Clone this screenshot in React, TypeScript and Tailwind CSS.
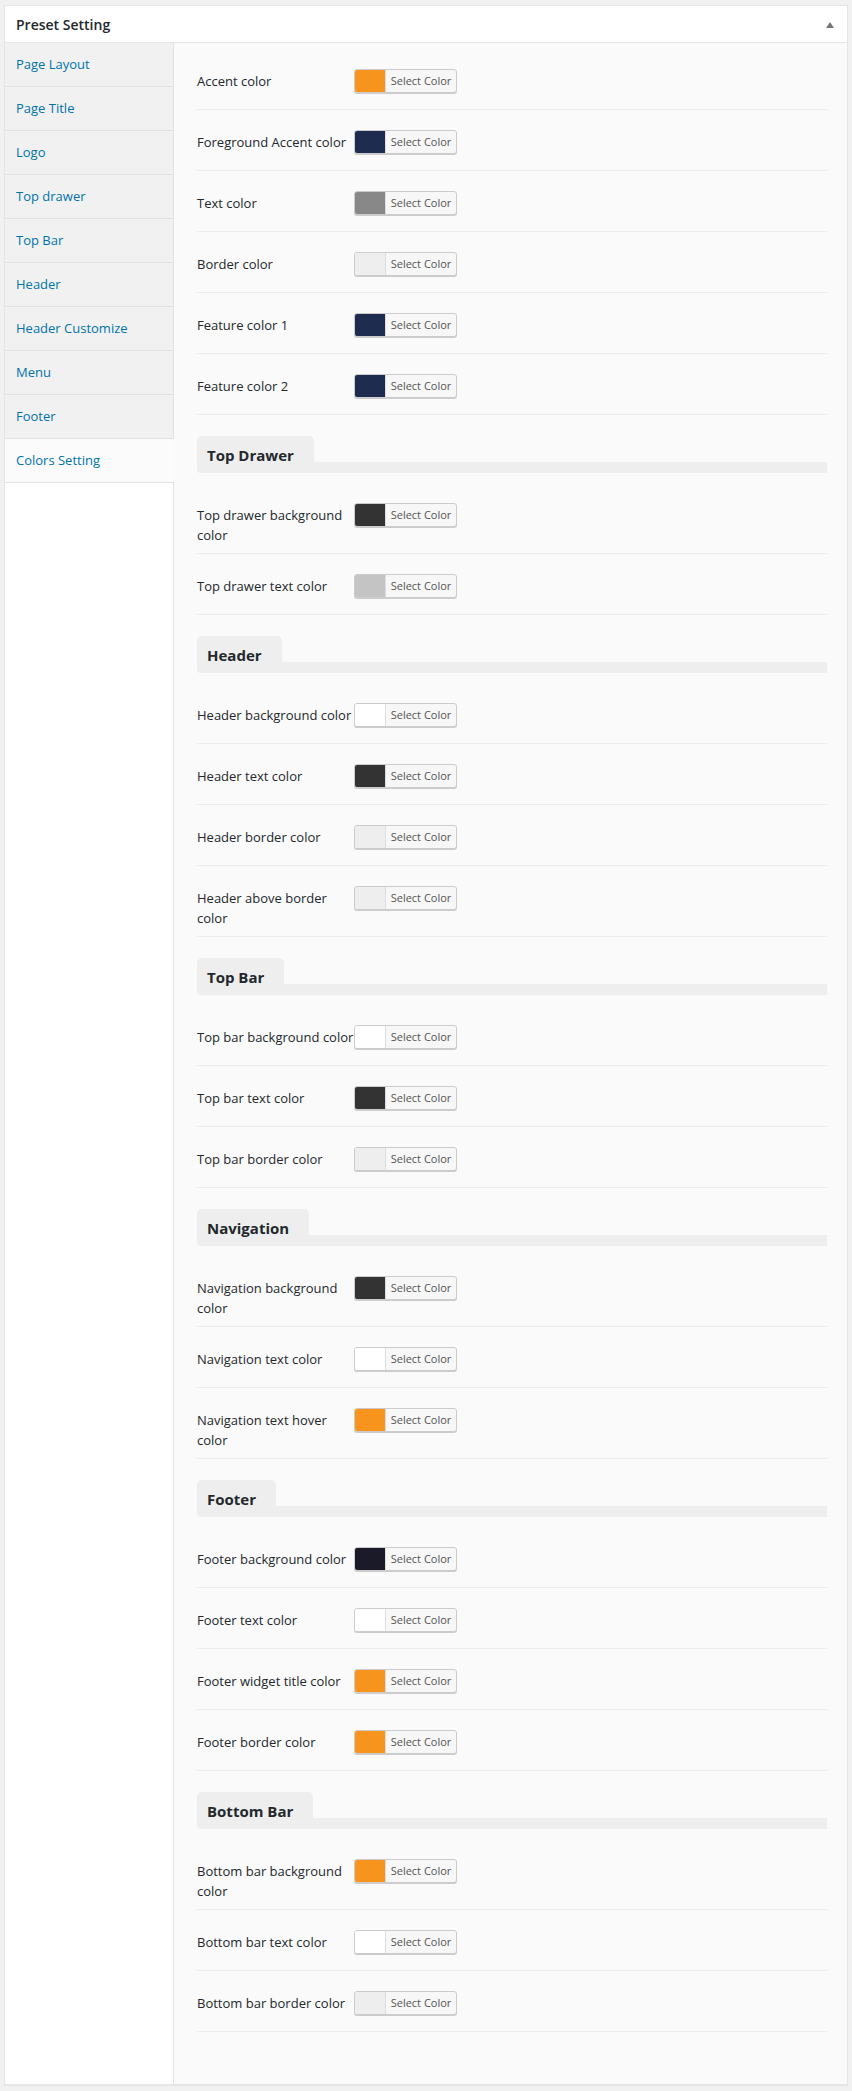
import React from "react";

type ColorRow = {
  label: string;
  swatch: string;
};

type Section = {
  title?: string;
  rows: ColorRow[];
};

const tabs = [
  "Page Layout",
  "Page Title",
  "Logo",
  "Top drawer",
  "Top Bar",
  "Header",
  "Header Customize",
  "Menu",
  "Footer",
  "Colors Setting",
];

const ORANGE = "bg-[#f7941d]";
const NAVY = "bg-[#1d2c4f]";
const DARK = "bg-[#333333]";
const LIGHT = "bg-[#eeeeee]";
const WHITE = "bg-white";

const sections: Section[] = [
  {
    rows: [
      { label: "Accent color", swatch: ORANGE },
      { label: "Foreground Accent color", swatch: NAVY },
      { label: "Text color", swatch: "bg-[#888888]" },
      { label: "Border color", swatch: LIGHT },
      { label: "Feature color 1", swatch: NAVY },
      { label: "Feature color 2", swatch: NAVY },
    ],
  },
  {
    title: "Top Drawer",
    rows: [
      { label: "Top drawer background\ncolor", swatch: DARK },
      { label: "Top drawer text color", swatch: "bg-[#c4c4c4]" },
    ],
  },
  {
    title: "Header",
    rows: [
      { label: "Header background color", swatch: WHITE },
      { label: "Header text color", swatch: DARK },
      { label: "Header border color", swatch: LIGHT },
      { label: "Header above border\ncolor", swatch: LIGHT },
    ],
  },
  {
    title: "Top Bar",
    rows: [
      { label: "Top bar background color", swatch: WHITE },
      { label: "Top bar text color", swatch: DARK },
      { label: "Top bar border color", swatch: LIGHT },
    ],
  },
  {
    title: "Navigation",
    rows: [
      { label: "Navigation background\ncolor", swatch: DARK },
      { label: "Navigation text color", swatch: WHITE },
      { label: "Navigation text hover\ncolor", swatch: ORANGE },
    ],
  },
  {
    title: "Footer",
    rows: [
      { label: "Footer background color", swatch: "bg-[#1a1a28]" },
      { label: "Footer text color", swatch: WHITE },
      { label: "Footer widget title color", swatch: ORANGE },
      { label: "Footer border color", swatch: ORANGE },
    ],
  },
  {
    title: "Bottom Bar",
    rows: [
      { label: "Bottom bar background\ncolor", swatch: ORANGE },
      { label: "Bottom bar text color", swatch: WHITE },
      { label: "Bottom bar border color", swatch: LIGHT },
    ],
  },
];

function ColorButton({ swatch }: { swatch: string }) {
  return (
    <button
      type="button"
      className="flex h-[24px] w-[103px] overflow-hidden rounded-[3px] border border-[#cccccc] bg-[#f7f7f7] shadow-[0_1px_0_#cccccc]">
      <span className={`h-full w-[30px] shrink-0 ${swatch}`} />
      <span className="flex h-full flex-1 items-center justify-center border-l border-[#dddddd] text-[11px] text-[#555555]">
        Select Color
      </span>
    </button>
  );
}

function SectionTitle({ title }: { title: string }) {
  return (
    <div className="mt-[21px] mb-[10px] flex items-end">
      <div className="flex h-[37px] items-center rounded-t-[5px] rounded-bl-[4px] bg-[#eeeeee] pr-[20px] pl-[10px] pt-[1px] text-[15px] font-bold text-[#23282d]">
        {title}
      </div>
      <div className="h-[11px] flex-1 bg-[#eeeeee]" />
    </div>
  );
}

export default function App() {
  return (
    <div className="min-h-screen bg-[#f1f1f1] px-[4px] pt-[5px] pb-[7px] font-['Open_Sans',sans-serif]">
      <div className="border border-[#e5e5e5] bg-white shadow-[0_1px_1px_rgba(0,0,0,0.04)]">
        {/* panel header */}
        <div className="flex h-[37px] items-center justify-between border-b border-[#e5e5e5] bg-white pr-[13px] pl-[11px]">
          <h2 className="text-[14px] font-semibold text-[#23282d]">
            Preset Setting
          </h2>
          <svg width="8" height="6" viewBox="0 0 8 6" className="mt-[1px]">
            <polygon points="4,0 8,6 0,6" fill="#72777c" />
          </svg>
        </div>

        <div className="flex">
          {/* left tabs */}
          <div className="flex w-[169px] shrink-0 flex-col">
            {tabs.map((tab) => {
              const active = tab === "Colors Setting";
              return (
                <div
                  key={tab}
                  className={`flex h-[44px] items-center border-b border-[#e2e2e2] pl-[11px] text-[13px] text-[#0073aa] ${
                    active
                      ? "bg-[#fbfbfb]"
                      : "border-r bg-[#f1f1f1]"
                  }`}>
                  {tab}
                </div>
              );
            })}
            <div className="flex-1 border-r border-[#e2e2e2] bg-white" />
          </div>

          {/* color options */}
          <div className="flex-1 bg-[#fafafa] pt-[6px] pr-[20px] pb-[52px] pl-[23px]">
            {sections.map((section, i) => (
              <div key={i}>
                {section.title && <SectionTitle title={section.title} />}
                {section.rows.map((row) => (
                  <div
                    key={row.label}
                    className="flex items-start border-b border-[#ececec]">
                    <div className="w-[157px] shrink-0 pt-[22px] pb-[8px] text-[13px] leading-[20px] whitespace-pre text-[#23282d]">
                      {row.label}
                    </div>
                    <div className="pt-[20px] pb-[16px]">
                      <ColorButton swatch={row.swatch} />
                    </div>
                  </div>
                ))}
              </div>
            ))}
          </div>
        </div>
      </div>
    </div>
  );
}
